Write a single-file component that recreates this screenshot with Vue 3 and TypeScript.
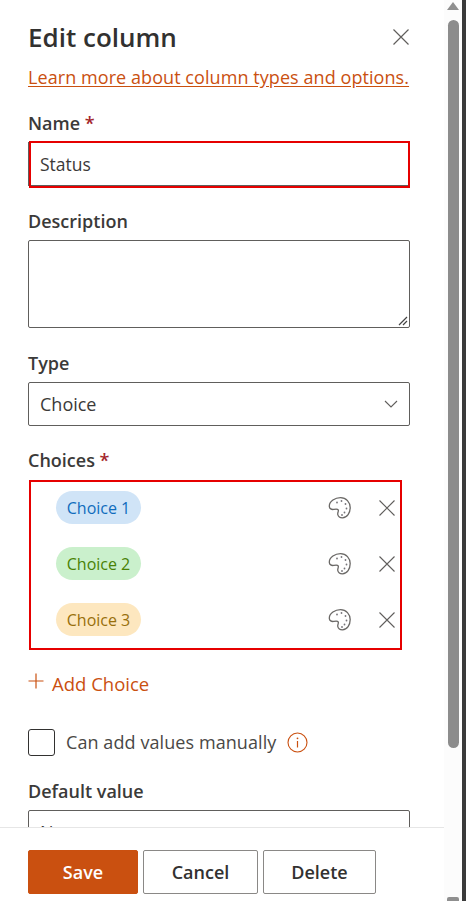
<script setup lang="ts">
const choices = [
  { label: 'Choice 1', bg: '#d0e4f7', fg: '#0f6cbd' },
  { label: 'Choice 2', bg: '#caf0cc', fg: '#498205' },
  { label: 'Choice 3', bg: '#fde7bf', fg: '#986f0b' },
]
</script>

<template>
  <div class="window">
    <div class="panel">
      <div class="scroll">
        <div class="head">
          <h1>Edit column</h1>
          <svg class="close" width="16" height="16" viewBox="0 0 16 16"><path d="M.5.500 15.500 15.500M15.500.500.500 15.500" /></svg>
        </div>
        <a class="learn">Learn more about column types and options.</a>

        <label class="lab name-lab">Name <span class="req">*</span></label>
        <div class="name-field">
          <span>Status</span>
          <i class="red"></i>
        </div>

        <label class="lab desc-lab">Description</label>
        <div class="textarea">
          <svg class="grip" width="10" height="10" viewBox="0 0 10 10"><path d="M9 1 1 9M9 5 5 9" /></svg>
        </div>

        <label class="lab type-lab">Type</label>
        <div class="select">
          <span>Choice</span>
          <svg width="14" height="8" viewBox="0 0 14 8"><path d="M1 1 7 7 13 1" /></svg>
        </div>

        <label class="lab choices-lab">Choices <span class="req">*</span></label>
        <div class="choices">
          <div v-for="c in choices" :key="c.label" class="choice">
            <span class="pill" :style="{ background: c.bg, color: c.fg }">{{ c.label }}</span>
            <svg class="palette" width="24" height="24" viewBox="0 0 24 24">
              <path class="outline" d="M12.5 1.600C7.200 1.600 1.300 5.200 1.300 10.200c0 2.600 2.300 3.600 4.400 3.200 2-.4 3.800-.8 4.500.4.800 1.400-.9 2.900-.4 4.800.5 2 2.400 3.200 4.600 3.200 4.800 0 7.800-5 7.800-10.200C22.200 6.200 18.200 1.600 12.500 1.600Z" />
              <circle cx="9" cy="6.500" r=".9" /><circle cx="13.500" cy="5" r=".9" /><circle cx="17.500" cy="8" r=".9" /><circle cx="18.500" cy="12.500" r=".9" /><circle cx="16.500" cy="16.500" r=".9" /><circle cx="14" cy="19" r=".9" />
            </svg>
            <svg class="remove" width="16" height="16" viewBox="0 0 16 16"><path d="M.5.500 15.500 15.500M15.500.500.500 15.500" /></svg>
          </div>
          <i class="red"></i>
        </div>

        <div class="add">
          <svg width="16" height="16" viewBox="0 0 16 16"><path d="M8 .500V15.500M.500 8H15.500" /></svg>
          <span>Add Choice</span>
        </div>

        <div class="check-row">
          <span class="box"></span>
          <span class="check-text">Can add values manually</span>
          <svg class="info" width="21" height="21" viewBox="0 0 21 21">
            <circle cx="10.500" cy="10.500" r="9.500" />
            <path d="M10.500 9V15.500" />
            <circle class="dot" cx="10.500" cy="6.300" r=".9" />
          </svg>
        </div>

        <label class="lab default-lab">Default value</label>
        <div class="select default-select"><span>None</span></div>
      </div>
      <div class="foot">
        <button class="btn primary save">Save</button>
        <button class="btn cancel">Cancel</button>
        <button class="btn delete">Delete</button>
      </div>
    </div>
    <div class="bar">
      <span class="arrow up"></span>
      <span class="thumb"></span>
      <span class="arrow-stub"></span>
    </div>
    <div class="edge"></div>
  </div>
</template>

<style>
html, body { margin: 0; background: #fff; overflow: hidden; }
</style>

<style scoped>
.window {
  display: flex;
  width: 466px;
  height: 901px;
  overflow: hidden;
  font-family: "Open Sans", "Noto Sans", sans-serif;
  color: #323130;
  background: #fff;
}
.panel { width: 444px; display: flex; flex-direction: column; flex: none; }
.scroll { flex: 1; min-height: 0; overflow: hidden; padding: 0 34px 0 28px; }
.head { display: flex; justify-content: space-between; align-items: center; height: 34px; margin-top: 20px; padding-right: 1px; }
h1 { margin: -1px 0 0; font-size: 26px; line-height: 34px; font-weight: 600; color: #323130; }
.close path { fill: none; stroke: #605e5c; stroke-width: 1.200; }
.learn {
  display: block;
  margin-top: 11px;
  font-size: 18px;
  line-height: 25px;
  letter-spacing: .07px;
  color: #ca5010;
  text-decoration: underline;
  text-underline-offset: 2px;
  white-space: nowrap;
}
.lab { display: block; font-size: 18px; line-height: 24px; font-weight: 600; color: #3b3a39; }
.req { color: #a4262c; }
.name-lab { margin-top: 21px; }
.name-field {
  position: relative;
  box-sizing: border-box;
  height: 44px;
  margin-top: 7px;
  display: flex;
  align-items: center;
  padding: 0 11px;
  font-size: 17.500px;
  border-left: 1px solid #605e5c;
  border-bottom: 1px solid #605e5c;
  color: #3b3a39;
}
.red { position: absolute; border: 2px solid #e60000; pointer-events: none; box-sizing: border-box; }
.name-field .red { left: 0; right: 0; top: -1px; bottom: -3px; }
.desc-lab { margin-top: 23px; }
.textarea {
  position: relative;
  box-sizing: border-box;
  height: 88px;
  margin-top: 7px;
  border: 1px solid #605e5c;
  border-radius: 2px;
}
.grip { position: absolute; right: 1px; bottom: 1px; }
.grip path { stroke: #444; stroke-width: 1.200; fill: none; }
.type-lab { margin-top: 23px; }
.select {
  box-sizing: border-box;
  height: 44px;
  margin-top: 7px;
  display: flex;
  justify-content: space-between;
  align-items: center;
  padding: 0 11px;
  font-size: 18px;
  border: 1px solid #605e5c;
  border-radius: 2px;
  color: #3b3a39;
}
.select svg path { fill: none; stroke: #605e5c; stroke-width: 1.100; }
.choices-lab { margin-top: 22px; }
.choices {
  position: relative;
  box-sizing: border-box;
  height: 170px;
  margin-top: 8px;
  margin-left: 1px;
  width: 373px;
  padding: 11px 7px 0 27px;
  display: flex;
  flex-direction: column;
  gap: 23px;
}
.choices .red { inset: 0; }
.choice { display: flex; align-items: center; height: 33px; }
.pill {
  width: 85px;
  height: 33px;
  border-radius: 17px;
  display: flex;
  align-items: center;
  justify-content: center;
  font-size: 16px;
}
.palette { margin-left: auto; }
.palette .outline { fill: none; stroke: #6a6866; stroke-width: 1.300; }
.palette circle { fill: #77757a; stroke: none; }
.remove { margin-left: 27px; }
.remove path { fill: none; stroke: #605e5c; stroke-width: 1.100; }
.add { display: flex; align-items: center; gap: 8px; margin-top: 21px; height: 24px; color: #ca5010; font-size: 18.500px; }
.add svg { margin: -4px 0 0 0; }
.add path { fill: none; stroke: #ca5010; stroke-width: 1.200; }
.check-row { display: flex; align-items: center; margin-top: 33px; height: 28px; }
.box { box-sizing: border-box; width: 27px; height: 27px; border: 1px solid #323130; border-radius: 3px; }
.check-text { margin-left: 11px; font-size: 18px; letter-spacing: .08px; color: #4a4846; }
.info { margin-left: 11px; }
.info circle { fill: none; stroke: #ca5010; stroke-width: 1.100; }
.info path { stroke: #ca5010; stroke-width: 1.200; }
.info .dot { fill: #ca5010; stroke: none; }
.default-lab { margin-top: 23px; }
.default-select { margin-top: 7px; }
.foot {
  flex: none;
  height: 74px;
  box-sizing: border-box;
  border-top: 1px solid #e6e6e6;
  padding: 22px 0 0 28px;
  display: flex;
  background: #fff;
}
.btn {
  box-sizing: border-box;
  height: 44px;
  font-family: inherit;
  font-size: 18px;
  font-weight: 600;
  border-radius: 2px;
  border: 1px solid #8a8886;
  background: #fff;
  color: #323130;
  padding: 0;
}
.primary { background: #ca5010; border-color: #ca5010; color: #fff; }
.save { width: 110px; }
.cancel { width: 115px; margin-left: 5px; }
.delete { width: 113px; margin-left: 5px; }
.bar { width: 18px; flex: none; position: relative; display: flex; flex-direction: column; align-items: center; background: #fcfcfc; }
.arrow.up { margin-top: 2px; width: 0; height: 0; border-left: 6px solid transparent; border-right: 6px solid transparent; border-bottom: 8px solid #8f8f8f; }
.thumb { margin-top: 10px; width: 11px; height: 728px; border-radius: 6px; background: #8c8c8c; }
.arrow-stub { margin-top: auto; width: 12px; height: 4px; border-radius: 2px 2px 0 0; background: #8f8f8f; }
.edge { width: 4px; flex: none; background: #3a3a3a; }
</style>
